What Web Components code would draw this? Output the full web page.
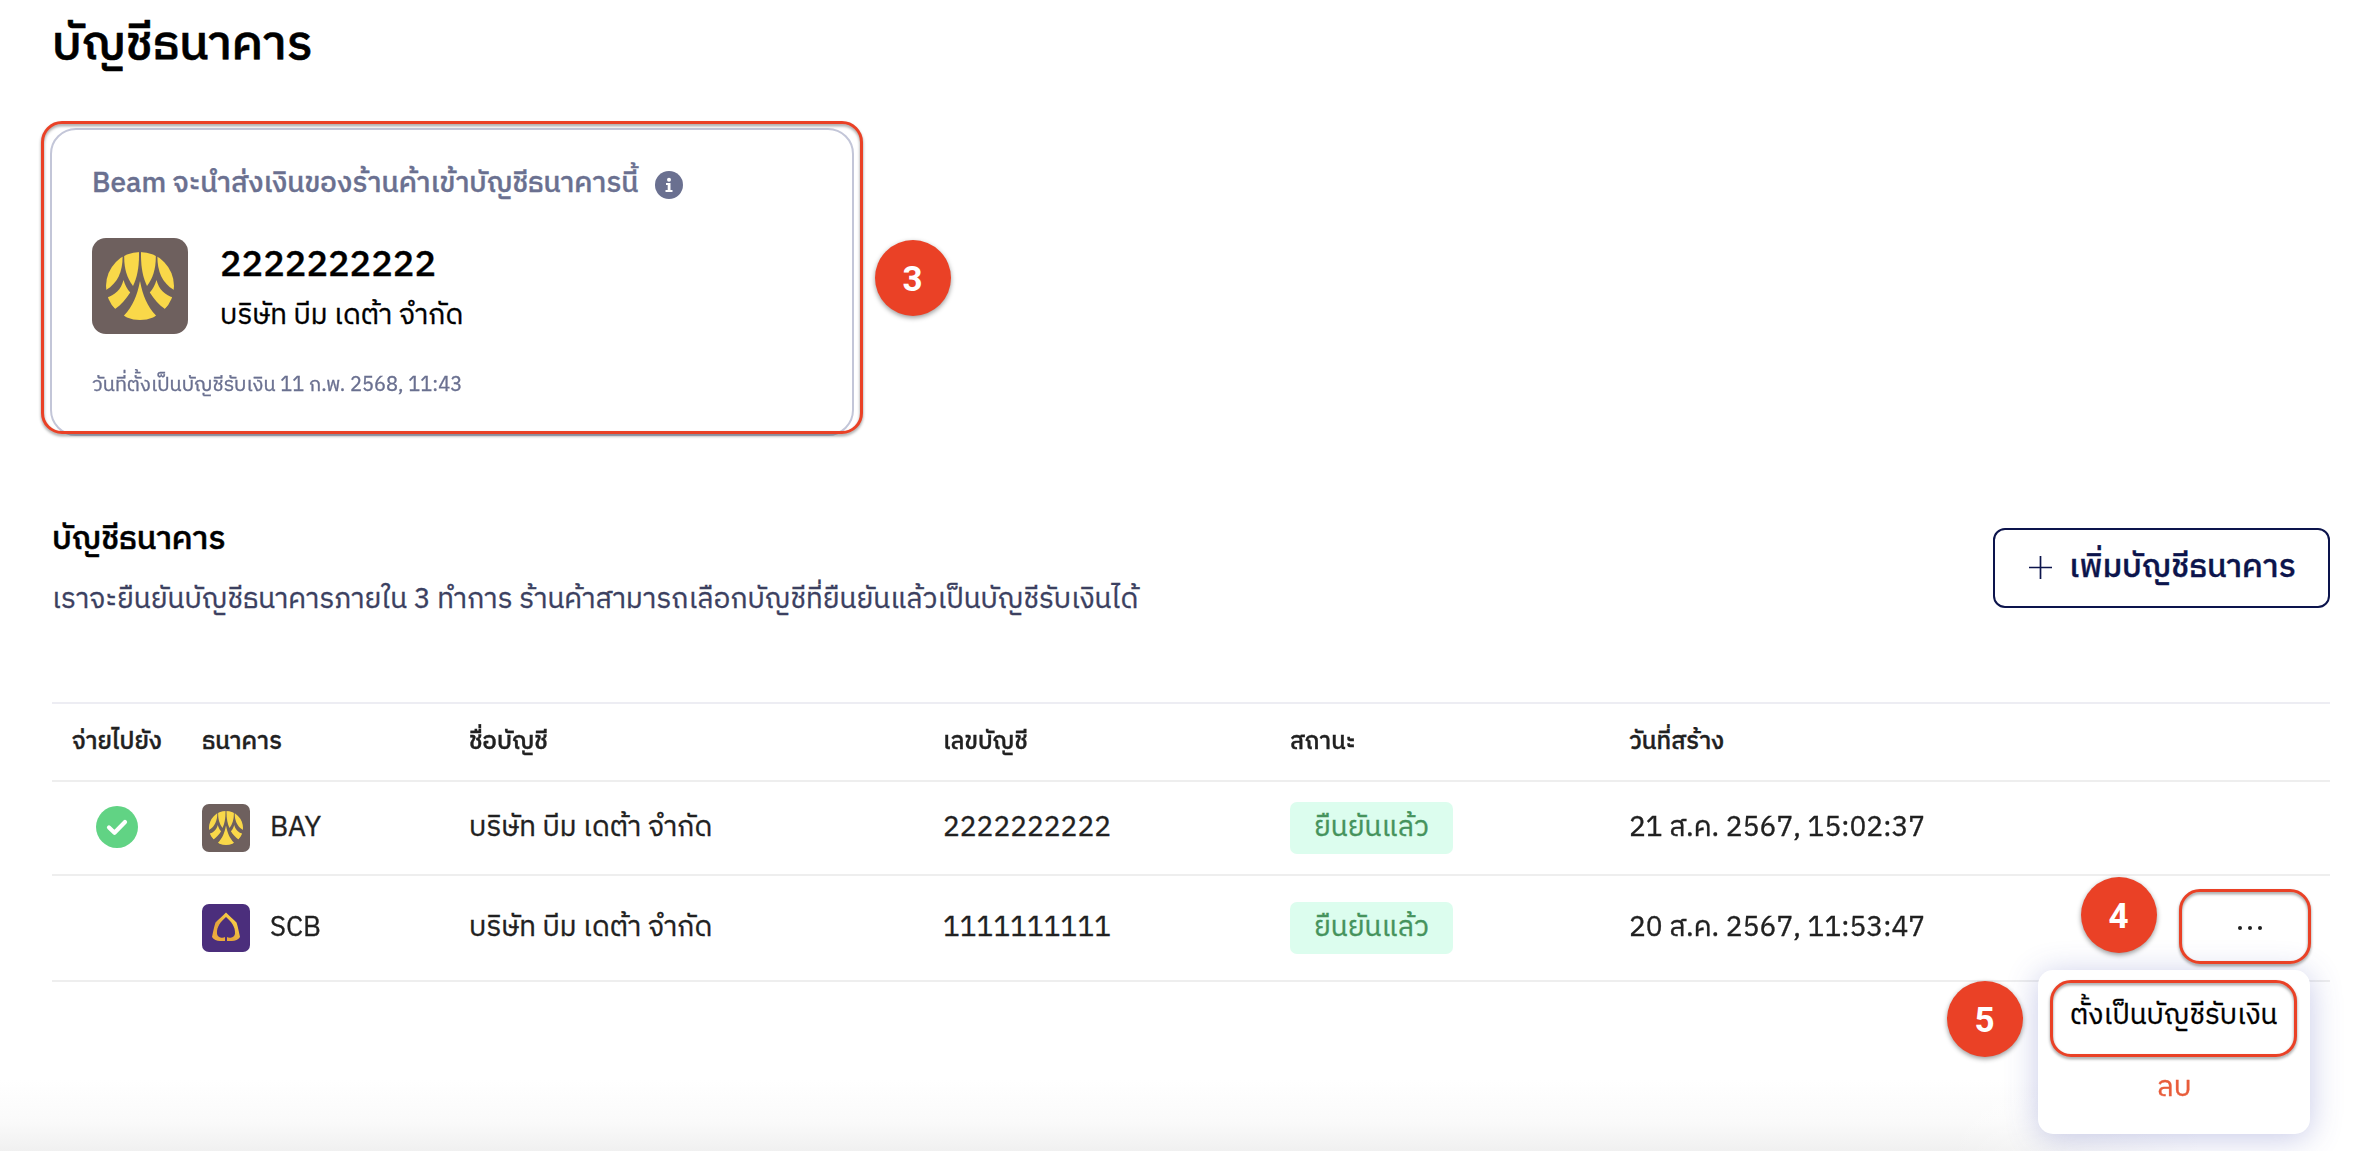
<!DOCTYPE html>
<html lang="th">
<head>
<meta charset="UTF-8">
<title>บัญชีธนาคาร</title>
<style>
body{
    margin: 0;
    background: #fff;
    font-family: "IBM Plex Sans Thai", "Noto Sans", "Noto Sans Thai", "Liberation Sans", sans-serif;
}
</style>
</head>
<body>
<bank-page></bank-page>
<script>
// one line of text, squeezed or stretched to a given width
class FitText extends HTMLElement{
    constructor(){
        super()
        this._shadowDom = this.attachShadow({mode:'open'})
        this._shadowDom.innerHTML = `
        <style>
        :host{
            display: block;
            white-space: nowrap;
            height: 40px;
            line-height: 40px;
            -webkit-text-stroke: .35px currentColor;
        }
        span{
            display: inline-block;
            transform-origin: 0 50%;
        }
        </style>
        <span><slot></slot></span>
        `
    }
    connectedCallback(){
        const w = Number(this.getAttribute('w'))
        const span = this._shadowDom.querySelector('span')
        this.style.width = w + 'px'
        span.style.transform = `scaleX(${w / span.offsetWidth})`
    }
}

class BankLogo extends HTMLElement{
    constructor(){
        super()
        this._shadowDom = this.attachShadow({mode:'open'})
        const bay = `
            <rect width="96" height="96" rx="14" fill="#6e605e"/>
            <clipPath id="c"><circle cx="48" cy="48" r="34"/></clipPath>
            <g fill="#f9d849" clip-path="url(#c)">
                <path d="M30.600 14V19C30.600 33 26 45 14 52V14Z"/>
                <path d="M65.400 14V19C65.400 33 70 45 82 52V14Z"/>
                <path d="M32.200 12H47V18C47 29 45 40 41 48C35 40 32.200 31 32.200 19Z"/>
                <path d="M63.800 12H49V18C49 29 51 40 55 48C61 40 63.800 31 63.800 19Z"/>
                <path d="M31.500 42C33 47 35 51 38.200 54.500C34 61 29 67 23 71L12 60C22 58.500 29 52 31.500 42Z"/>
                <path d="M64.500 42C63 47 61 51 57.800 54.500C62 61 67 67 73 71L84 60C74 58.500 67 52 64.500 42Z"/>
                <path d="M48 43C51 58 55 68 64 77.500L60 84H36L32 77.500C41 68 45 58 48 43Z"/>
            </g>`
        const scb = `
            <defs><linearGradient id="g" x1="0" y1="1" x2="1" y2="0">
                <stop offset="0" stop-color="#f2ae3d"/><stop offset=".4" stop-color="#e3a53c"/>
                <stop offset=".75" stop-color="#f7cb45"/><stop offset="1" stop-color="#d29a3c"/>
            </linearGradient></defs>
            <rect width="96" height="96" rx="14" fill="#4b2e7c"/>
            <path fill="url(#g)" fill-rule="evenodd" d="M48 17C54 24 64 31 69 37C72 46 74 57 76 66C73 71 66 74 60 74H50V66C54 69 65 68 66 59C67 45 58 35 48 26C38 35 29 45 30 59C31 68 42 69 46 66V74H36C30 74 23 71 20 66C22 57 24 46 27 37C32 31 42 24 48 17Z"/>`
        this._shadowDom.innerHTML = `
        <style>
        :host{ display: block; width: 48px; height: 48px; }
        :host([large]){ width: 96px; height: 96px; }
        svg{ display: block; width: 100%; height: 100%; }
        </style>
        <svg viewBox="0 0 96 96">${this.getAttribute('bank') == 'SCB' ? scb : bay}</svg>
        `
    }
}

class MarkBadge extends HTMLElement{
    constructor(){
        super()
        this._shadowDom = this.attachShadow({mode:'open'})
        this._shadowDom.innerHTML = `
        <style>
        :host{
            position: absolute;
            display: flex;
            align-items: center;
            justify-content: center;
            box-sizing: border-box;
            width: 76px;
            height: 76px;
            padding: 3px 1px 0 0;
            border-radius: 50%;
            background: #ea4126;
            color: #fff;
            font: bold 35px/40px Roboto, "Liberation Sans", sans-serif;
            box-shadow: 0 2px 5px rgba(0,0,0,.4);
        }
        </style>
        <slot></slot>
        `
    }
}

class MarkFrame extends HTMLElement{
    constructor(){
        super()
        this._shadowDom = this.attachShadow({mode:'open'})
        this._shadowDom.innerHTML = `
        <style>
        :host{
            position: absolute;
            display: block;
            box-sizing: border-box;
            border: 3px solid #ea4126;
            border-radius: 21px;
            filter: drop-shadow(0 2px 1.5px rgba(0,0,0,.4));
        }
        </style>
        `
    }
}

class PayoutCard extends HTMLElement{
    constructor(){
        super()
        this._shadowDom = this.attachShadow({mode:'open'})
        this._shadowDom.innerHTML = `
        <style>
        :host{
            display: flex;
            flex-direction: column;
            box-sizing: border-box;
            position: relative;
            width: 804px;
            height: 308px;
            padding: 33px 40px 0;
            border: 2px solid #c3c6d8;
            border-radius: 26px;
        }
        .head{
            display: flex;
            align-items: center;
            gap: 16px;
            height: 42px;
            color: #6a7090;
            font-size: 28px;
            font-weight: 500;
        }
        .account{
            display: flex;
            gap: 32px;
            margin-top: 33px;
        }
        .number{ font-size: 36px; font-weight: 500; margin-top: 8px; }
        .name{ font-size: 28px; margin-top: 10px; }
        .date{ font-size: 20px; color: #6a7090; margin-top: 30px; }
        svg{ display: block; margin-top: 1px; }
        mark-frame{ left: -11px; top: -9px; width: 822px; height: 313px; }
        mark-badge{ left: 823px; top: 110px; }
        </style>
        <div class="head">
            <fit-text w="547">Beam จะนำส่งเงินของร้านค้าเข้าบัญชีธนาคารนี้</fit-text>
            <svg width="28" height="28" viewBox="0 0 28 28">
                <circle cx="14" cy="14" r="14" fill="#6a7090"/>
                <circle cx="14" cy="8.800" r="2" fill="#fff"/>
                <path d="M11 12H15.500V19H17.500V21H10.500V19H12.700V14H11Z" fill="#fff"/>
            </svg>
        </div>
        <div class="account">
            <bank-logo bank="BAY" large></bank-logo>
            <div>
                <fit-text class="number" w="216">2222222222</fit-text>
                <fit-text class="name" w="243">บริษัท บีม เดต้า จำกัด</fit-text>
            </div>
        </div>
        <fit-text class="date" w="370">วันที่ตั้งเป็นบัญชีรับเงิน 11 ก.พ. 2568, 11:43</fit-text>
        <mark-frame></mark-frame>
        <mark-badge>3</mark-badge>
        `
    }
}

class AddButton extends HTMLElement{
    constructor(){
        super()
        this._shadowDom = this.attachShadow({mode:'open'})
        this._shadowDom.innerHTML = `
        <style>
        :host{
            display: flex;
            align-items: center;
            gap: 17px;
            box-sizing: border-box;
            width: 337px;
            height: 80px;
            padding-left: 34px;
            border: 2px solid #0c144c;
            border-radius: 12px;
            color: #0c144c;
            font-size: 32px;
            font-weight: 500;
        }
        svg{ margin-top: -2px; }
        </style>
        <svg width="23" height="23" viewBox="0 0 23 23" stroke="#0c144c" stroke-width="1.700"><path d="M11.500 0V23M0 11.500H23"/></svg>
        <fit-text w="227"><slot></slot></fit-text>
        `
    }
}

class BankMenu extends HTMLElement{
    constructor(){
        super()
        this._shadowDom = this.attachShadow({mode:'open'})
        this._shadowDom.innerHTML = `
        <style>
        :host{
            position: absolute;
            display: flex;
            flex-direction: column;
            align-items: center;
            box-sizing: border-box;
            width: 272px;
            height: 164px;
            padding-top: 26px;
            gap: 32px;
            border-radius: 15px;
            background: #fff;
            box-shadow: 0 4px 32px rgba(65,75,175,.3);
            font-size: 28px;
            color: #000;
        }
        .del{ color: #e85c3a; }
        mark-frame{ left: 12px; top: 10px; width: 247px; height: 77px; }
        mark-badge{ left: -91px; top: 11px; }
        </style>
        <fit-text w="208">ตั้งเป็นบัญชีรับเงิน</fit-text>
        <fit-text class="del" w="34">ลบ</fit-text>
        <mark-frame></mark-frame>
        <mark-badge>5</mark-badge>
        `
    }
}

class BankTable extends HTMLElement{
    constructor(){
        super()
        this._shadowDom = this.attachShadow({mode:'open'})
        const row = (bank, no, date, extra) => `
            <fit-text w="51">${bank}</fit-text>
            <fit-text w="243">บริษัท บีม เดต้า จำกัด</fit-text>
            <fit-text w="168">${no}</fit-text>
            <div class="status"><fit-text w="115">ยืนยันแล้ว</fit-text></div>
            <fit-text w="296">${date}</fit-text>
            <div>${extra}</div>`
        this._shadowDom.innerHTML = `
        <style>
        :host{
            display: block;
            position: relative;
            width: 2278px;
            border-top: 2px solid #ededf3;
            color: #212121;
            font-size: 28px;
        }
        .row{
            display: grid;
            grid-template-columns: 150px 68px 199px 474px 347px 339px 1fr 131px;
            align-items: center;
            box-sizing: border-box;
            height: 94px;
            border-bottom: 2px solid #eee;
        }
        .head{
            grid-template-columns: 20px 130px 267px 474px 347px 339px 1fr;
            height: 78px;
            font-size: 24px;
            font-weight: 500;
        }
        .last{ height: 106px; }
        .check{ display: block; margin: -2px 0 0 44px; }
        .status{
            display: flex;
            align-items: center;
            justify-content: center;
            width: 163px;
            height: 52px;
            border-radius: 7px;
            background: #dcfdee;
            color: #45935c;
        }
        .dots{ display: flex; gap: 6px; margin: -1px 0 0 39px; }
        .dots i{ width: 4px; height: 4px; border-radius: 50%; background: #212121; }
        .f4{ left: 2127px; top: 185px; width: 132px; height: 75px; }
        .b4{ left: 2029px; top: 173px; }
        bank-menu{ left: 1986px; top: 266px; }
        </style>
        <div class="row head">
            <i></i>
            <fit-text w="90">จ่ายไปยัง</fit-text>
            <fit-text w="80">ธนาคาร</fit-text>
            <fit-text w="79">ชื่อบัญชี</fit-text>
            <fit-text w="85">เลขบัญชี</fit-text>
            <fit-text w="66">สถานะ</fit-text>
            <fit-text w="95">วันที่สร้าง</fit-text>
        </div>
        <div class="row">
            <svg class="check" width="42" height="42" viewBox="0 0 42 42">
                <circle cx="21" cy="21" r="21" fill="#61d384"/>
                <path d="M13 21.500L18.500 26.700L29 16" fill="none" stroke="#fff" stroke-width="4.200" stroke-linecap="round" stroke-linejoin="round"/>
            </svg>
            <bank-logo bank="BAY"></bank-logo>
            ${row('BAY', '2222222222', '21 ส.ค. 2567, 15:02:37', '')}
        </div>
        <div class="row last">
            <i></i>
            <bank-logo bank="SCB"></bank-logo>
            ${row('SCB', '1111111111', '20 ส.ค. 2567, 11:53:47', '<div class="dots"><i></i><i></i><i></i></div>')}
        </div>
        <bank-menu></bank-menu>
        <mark-frame class="f4"></mark-frame>
        <mark-badge class="b4">4</mark-badge>
        `
    }
}

class BankPage extends HTMLElement{
    constructor(){
        super()
        this._shadowDom = this.attachShadow({mode:'open'})
        this._shadowDom.innerHTML = `
        <style>
        :host{
            display: block;
            box-sizing: border-box;
            height: 1151px;
            padding: 25px 48px 0 52px;
            overflow: hidden;
            color: #000;
            background:
                linear-gradient(to right, rgba(255,255,255,0) 1950px, #fff 2200px),
                linear-gradient(#fff 1080px, #fafafa 1122px, #f0f0f0 1151px);
        }
        .title{ font-size: 48px; font-weight: 500; -webkit-text-stroke-width: .6px; }
        payout-card{ margin: 63px 0 0 -2px; }
        .section{
            display: flex;
            justify-content: space-between;
            align-items: flex-start;
            height: 174px;
            margin-top: 92px;
        }
        .h2{ font-size: 32px; font-weight: 500; margin-top: -8px; -webkit-text-stroke-width: .5px; }
        .desc{ font-size: 28px; color: #3b4060; margin-top: 20px; }
        </style>
        <fit-text class="title" w="261">บัญชีธนาคาร</fit-text>
        <payout-card></payout-card>
        <div class="section">
            <div>
                <fit-text class="h2" w="174">บัญชีธนาคาร</fit-text>
                <fit-text class="desc" w="1086">เราจะยืนยันบัญชีธนาคารภายใน 3 ทำการ ร้านค้าสามารถเลือกบัญชีที่ยืนยันแล้วเป็นบัญชีรับเงินได้</fit-text>
            </div>
            <add-button>เพิ่มบัญชีธนาคาร</add-button>
        </div>
        <bank-table></bank-table>
        `
    }
}

window.customElements.define('fit-text', FitText)
window.customElements.define('bank-logo', BankLogo)
window.customElements.define('mark-badge', MarkBadge)
window.customElements.define('mark-frame', MarkFrame)
window.customElements.define('payout-card', PayoutCard)
window.customElements.define('add-button', AddButton)
window.customElements.define('bank-menu', BankMenu)
window.customElements.define('bank-table', BankTable)
window.customElements.define('bank-page', BankPage)
</script>
</body>
</html>
